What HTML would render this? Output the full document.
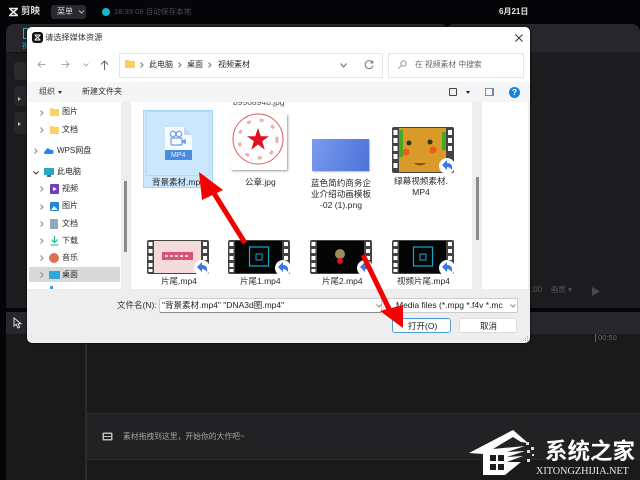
<!DOCTYPE html>
<html><head><meta charset="utf-8"><style>
html,body{margin:0;padding:0;background:#050507;width:640px;height:480px;overflow:hidden}
body{position:relative;font-family:"Liberation Sans","Noto Sans CJK SC",sans-serif;font-size:9px;color:#2a2a2a;filter:blur(.3px)}
.a{position:absolute}
.t{position:absolute;white-space:nowrap;line-height:12px}
.c{position:absolute;text-align:center;line-height:11px;font-size:8.6px;color:#2a2a2a}
svg{position:absolute;overflow:visible}
</style></head><body>
<!-- app background -->
<div class="a" style="left:6px;top:24px;width:634px;height:28px;background:#26262b;border-radius:8px 8px 0 0"></div>
<div class="a" style="left:6px;top:52px;width:634px;height:258px;background:#1c1c1e"></div>
<div class="a" style="left:0;top:310px;width:640px;height:170px;background:#1a1a1b"></div>
<div class="a" style="left:6px;top:312px;width:634px;height:22px;background:#28282c"></div>
<div class="a" style="left:0;top:308px;width:640px;height:4px;background:#050507"></div>
<div class="a" style="left:0;top:310px;width:6px;height:170px;background:#050507"></div>
<div class="a" style="left:85px;top:334px;width:1.5px;height:146px;background:#2c2c2e"></div>
<div class="a" style="left:443px;top:24px;border-top:3px solid #050507;border-left:4px solid transparent;border-right:4px solid transparent"></div>
<!-- top bar -->
<svg style="left:8px;top:7px" width="12" height="10" viewBox="0 0 12 10"><path d="M1 1.500h9M1 8.500h9M2 2l7 6M9 2L2 8" stroke="#e8e8e8" stroke-width="1.600" fill="none"/></svg>
<div class="t" style="left:21px;top:6px;font-size:9.500px;color:#ddd;font-weight:bold">剪映</div>
<div class="a" style="left:51px;top:5px;width:35px;height:14px;background:#2a2a2e;border-radius:3px"></div>
<div class="t" style="left:57px;top:6px;font-size:8px;color:#ddd">菜单</div>
<svg style="left:78px;top:10px" width="7" height="4"><path d="M1 .5l2.500 2.500L6 .5" stroke="#bbb" fill="none"/></svg>
<div class="a" style="left:102px;top:8px;width:8px;height:8px;border-radius:50%;background:#12b8c8"></div>
<div class="t" style="left:114px;top:6px;font-size:7.600px;color:#4e4e52">18:39:08 自动保存本地</div>
<div class="t" style="left:499px;top:6px;font-size:8px;color:#e6e6e6;font-weight:bold">6月21日</div>
<!-- left hints -->
<div class="a" style="left:23px;top:28px;width:7px;height:9px;border:1px solid #1fb5c2"></div>
<div class="t" style="left:22px;top:41px;font-size:7px;color:#1fb5c2">视</div>
<div class="a" style="left:6px;top:52px;width:21px;height:1px;background:#111"></div>
<div class="a" style="left:14px;top:62px;width:13px;height:18px;background:#2a2a2d;border-radius:3px 0 0 3px"></div>
<div class="a" style="left:14px;top:86px;width:13px;height:20px;background:#27272a;border-radius:3px 0 0 3px"></div>
<div class="a" style="left:14px;top:112px;width:13px;height:22px;background:#27272a;border-radius:3px 0 0 3px"></div>
<div class="a" style="left:18px;top:97px;border-left:3px solid #bbb;border-top:2px solid transparent;border-bottom:2px solid transparent"></div>
<div class="a" style="left:18px;top:122px;border-left:3px solid #bbb;border-top:2px solid transparent;border-bottom:2px solid transparent"></div>
<!-- player controls -->
<div class="t" style="left:531px;top:284px;font-size:8px;color:#55555a">:00</div>
<div class="t" style="left:551px;top:284px;font-size:7.500px;color:#55555a">画质 ▾</div>
<svg style="left:592px;top:287px" width="8" height="9"><path d="M0 0l8 4.500L0 9z" fill="#4b4b4f"/></svg>
<div class="a" style="left:595px;top:334px;width:1px;height:8px;background:#666"></div>
<div class="t" style="left:598px;top:332px;font-size:7.500px;color:#666">00:50</div>
<!-- cursor -->
<svg style="left:13px;top:317px" width="9" height="12" viewBox="0 0 9 12"><path d="M1 1v8l2.200-1.600L5 11l1.600-.8L5 6.800h3z" stroke="#ddd" fill="none"/></svg>
<!-- timeline drop area -->
<div class="a" style="left:87px;top:413px;width:553px;height:45px;background:#222224;border-top:1px dotted #333;border-bottom:1px dotted #333"></div>
<svg style="left:102px;top:432px" width="11" height="9"><rect x=".5" y=".5" width="10" height="8" rx="1" fill="#bbb"/><rect x="2" y="2" width="7" height="2" fill="#222"/><rect x="2" y="5" width="7" height="2" fill="#222"/></svg>
<div class="t" style="left:123px;top:431px;font-size:7.800px;color:#a4a4a4">素材拖拽到这里，开始你的大作吧~</div>
<!-- dialog -->
<div class="a" style="left:27px;top:27px;width:503px;height:316px;background:#eeeeee;border-radius:5px;box-shadow:0 0 2px #000;overflow:hidden">
 <div class="a" style="left:0;top:0;width:503px;height:55px;background:#fff"></div>
 <div class="a" style="left:0;top:55px;width:503px;height:20px;background:#f3f5f7"></div>
 <div class="a" style="left:0;top:75px;width:94px;height:187px;background:#fff"></div>
 <div class="a" style="left:104px;top:75px;width:341px;height:187px;background:#fff"></div>
 <div class="a" style="left:455px;top:75px;width:46px;height:187px;background:#fff"></div>
 <div class="a" style="left:97px;top:154px;width:3px;height:71px;background:#8b8b8b"></div>
 <div class="a" style="left:448.500px;top:150px;width:3px;height:63px;background:#8b8b8b"></div>
</div>
<svg style="left:522px;top:335px" width="7" height="7"><g fill="#aaa"><rect x="5" y="1" width="1" height="1"/><rect x="3" y="3" width="1" height="1"/><rect x="5" y="3" width="1" height="1"/><rect x="1" y="5" width="1" height="1"/><rect x="3" y="5" width="1" height="1"/><rect x="5" y="5" width="1" height="1"/></g></svg>
<!-- title -->
<div class="a" style="left:32px;top:32px;width:11px;height:11px;background:#111;border-radius:3px"></div>
<svg style="left:34px;top:34px" width="7" height="7"><path d="M.5 1h6M.5 6h6M1 1.500l5 4M6 1.500l-5 4" stroke="#fff" fill="none"/></svg>
<div class="t" style="left:45px;top:32px;font-size:8.200px;color:#333">请选择媒体资源</div>
<svg style="left:515px;top:34px" width="8" height="8"><path d="M.5.5l7 7M7.500.5l-7 7" stroke="#333" fill="none"/></svg>
<!-- nav row -->
<svg style="left:37px;top:60px" width="9" height="9"><path d="M8.500 4.500H1M4 1.500l-3 3 3 3" stroke="#aaa" fill="none"/></svg>
<svg style="left:61px;top:60px" width="9" height="9"><path d="M.5 4.500H8M5 1.500l3 3-3 3" stroke="#aaa" fill="none"/></svg>
<svg style="left:83px;top:63px" width="6" height="4"><path d="M.5.5L3 3 5.500.5" stroke="#aaa" fill="none"/></svg>
<svg style="left:100px;top:60px" width="9" height="10"><path d="M4.500 10V1M1 4.500l3.500-3.500L8 4.500" stroke="#666" fill="none"/></svg>
<div class="a" style="left:119px;top:52.500px;width:262px;height:23px;border:1px solid #e6e6e6;background:#fff"></div>
<div class="a" style="left:388px;top:52.500px;width:134px;height:23px;border:1px solid #e6e6e6;background:#fff"></div>
<svg style="left:125px;top:60px" width="10" height="8"><path d="M0 1a1 1 0 011-1h3l1 1h4a1 1 0 011 1v5a1 1 0 01-1 1H1a1 1 0 01-1-1z" fill="#fbcf5d"/></svg>
<svg style="left:140px;top:62px" width="4" height="6"><path d="M.5.5L3 3 .5 5.500" stroke="#777" fill="none"/></svg>
<div class="t" style="left:149px;top:59px;font-size:8px">此电脑</div>
<svg style="left:178px;top:62px" width="4" height="6"><path d="M.5.5L3 3 .5 5.500" stroke="#777" fill="none"/></svg>
<div class="t" style="left:187px;top:59px;font-size:8px">桌面</div>
<svg style="left:208px;top:62px" width="4" height="6"><path d="M.5.5L3 3 .5 5.500" stroke="#777" fill="none"/></svg>
<div class="t" style="left:218px;top:59px;font-size:8px">视频素材</div>
<svg style="left:340px;top:63px" width="7" height="5"><path d="M.5.5L3.500 4 6.500.5" stroke="#666" fill="none"/></svg>
<svg style="left:364px;top:60px" width="10" height="10"><path d="M8.500 2.500A4 4 0 109 5.500M8.800.5v2.500H6.300" stroke="#777" fill="none"/></svg>
<svg style="left:398px;top:60px" width="9" height="9"><circle cx="5.500" cy="3.500" r="2.700" stroke="#999" fill="none"/><path d="M3.500 5.500L.5 8.500" stroke="#999"/></svg>
<div class="t" style="left:415px;top:59px;font-size:7.800px;color:#666">在 视频素材 中搜索</div>
<!-- toolbar -->
<div class="t" style="left:39px;top:86px;font-size:8px;color:#333">组织</div>
<div class="a" style="left:58px;top:91px;border-top:3px solid #333;border-left:2.500px solid transparent;border-right:2.500px solid transparent"></div>
<div class="t" style="left:82px;top:86px;font-size:8px;color:#333">新建文件夹</div>
<div class="a" style="left:449px;top:88px;width:6px;height:6px;border:1.200px solid #444;background:#eee;border-radius:1px"></div>
<div class="a" style="left:466px;top:91px;border-top:3px solid #223;border-left:2.500px solid transparent;border-right:2.500px solid transparent"></div>
<div class="a" style="left:485px;top:88px;width:6px;height:6px;border:1px solid #889;border-right:2.500px solid #68a;background:#f8f8f8"></div>
<div class="a" style="left:509px;top:87px;width:11px;height:11px;border-radius:50%;background:#1284e0;color:#fff;font-size:8.500px;font-weight:bold;line-height:11px;text-align:center">?</div>
<!-- tree -->
<svg style="left:40px;top:110px" width="4" height="6"><path d="M.5.5L3 3 .5 5.500" stroke="#888" fill="none"/></svg>
<svg style="left:50px;top:108px" width="9" height="8"><path d="M0 1a1 1 0 011-1h2l1 1h4a1 1 0 011 1v5a1 1 0 01-1 1H1a1 1 0 01-1-1z" fill="#fbd268"/></svg>
<div class="t" style="left:62px;top:106px;font-size:8px">图片</div>
<svg style="left:40px;top:127px" width="4" height="6"><path d="M.5.5L3 3 .5 5.500" stroke="#888" fill="none"/></svg>
<svg style="left:50px;top:126px" width="9" height="8"><path d="M0 1a1 1 0 011-1h2l1 1h4a1 1 0 011 1v5a1 1 0 01-1 1H1a1 1 0 01-1-1z" fill="#fbd268"/></svg>
<div class="t" style="left:62px;top:124px;font-size:8px">文档</div>
<svg style="left:34px;top:148px" width="4" height="6"><path d="M.5.5L3 3 .5 5.500" stroke="#888" fill="none"/></svg>
<svg style="left:44px;top:147px" width="10" height="7"><path d="M1.500 7a1.500 1.500 0 010-3 2.500 2.500 0 014.800-1A2 2 0 018.500 7z" fill="#2a86e2"/></svg>
<div class="t" style="left:57px;top:145px;font-size:8px">WPS网盘</div>
<svg style="left:33px;top:171px" width="6" height="4"><path d="M.5.5L3 3 5.500.5" stroke="#333" fill="none"/></svg>
<div class="a" style="left:44px;top:168px;width:10px;height:7px;background:#2fa4c6"></div><div class="a" style="left:47px;top:175px;width:4px;height:1.500px;background:#667"></div>
<div class="t" style="left:57px;top:166px;font-size:8px">此电脑</div>
<svg style="left:40px;top:186px" width="4" height="6"><path d="M.5.5L3 3 .5 5.500" stroke="#888" fill="none"/></svg>
<div class="a" style="left:50px;top:184px;width:9px;height:10px;background:#6d3ec0;border-radius:1px"></div>
<div class="a" style="left:53px;top:187px;border-left:4px solid #fff;border-top:2px solid transparent;border-bottom:2px solid transparent"></div>
<div class="t" style="left:62px;top:183px;font-size:8px">视频</div>
<svg style="left:40px;top:204px" width="4" height="6"><path d="M.5.5L3 3 .5 5.500" stroke="#888" fill="none"/></svg>
<svg style="left:50px;top:202px" width="9" height="9"><rect width="9" height="9" rx="1" fill="#1f86e0"/><path d="M1 8l3-4 4 4z" fill="#fff"/></svg>
<div class="t" style="left:62px;top:200px;font-size:8px">图片</div>
<svg style="left:40px;top:221px" width="4" height="6"><path d="M.5.5L3 3 .5 5.500" stroke="#888" fill="none"/></svg>
<div class="a" style="left:50px;top:219px;width:8px;height:10px;background:#8fa6bc;border-radius:1px"></div>
<div class="t" style="left:62px;top:218px;font-size:8px">文档</div>
<svg style="left:40px;top:238px" width="4" height="6"><path d="M.5.5L3 3 .5 5.500" stroke="#888" fill="none"/></svg>
<svg style="left:50px;top:236px" width="9" height="10"><path d="M4.500 0v6M1.500 3.500l3 3 3-3M.5 9h8" stroke="#1cb58a" stroke-width="1.100" fill="none"/></svg>
<div class="t" style="left:62px;top:235px;font-size:8px">下载</div>
<svg style="left:40px;top:255px" width="4" height="6"><path d="M.5.5L3 3 .5 5.500" stroke="#888" fill="none"/></svg>
<div class="a" style="left:49px;top:253px;width:10px;height:10px;border-radius:50%;background:#e2704e"></div>
<div class="t" style="left:62px;top:252px;font-size:8px">音乐</div>
<div class="a" style="left:29px;top:267px;width:91px;height:15px;background:#d9d9d9"></div>
<svg style="left:40px;top:272px" width="4" height="6"><path d="M.5.5L3 3 .5 5.500" stroke="#888" fill="none"/></svg>
<div class="a" style="left:49px;top:271px;width:11px;height:8px;background:#2da8d8"></div>
<div class="t" style="left:62px;top:269px;font-size:8px">桌面</div>
<div class="a" style="left:50px;top:286px;width:3px;height:3px;background:#4a9be0"></div>
<!-- files -->
<div class="a" style="left:233px;top:102px;width:60px;height:6px;overflow:hidden"><div class="t" style="left:0;top:-6px;font-size:8.500px;color:#555">b956894b.jpg</div></div>
<div class="a" style="left:143px;top:110px;width:70px;height:78px;background:#cce6fb;border:1px solid #a8d6f7;box-sizing:border-box"></div>
<div class="a" style="left:146px;top:111px;width:64px;height:65px;border:1px solid #b8d9f0;box-sizing:border-box"></div>
<svg style="left:165px;top:127px" width="27" height="33" viewBox="0 0 27 33"><path d="M0 0h19l8 8v25H0z" fill="#f6fbff"/><path d="M19 0l8 8h-8z" fill="#c2d9f0"/><rect y="23" width="27" height="10" fill="#4b8be0"/><circle cx="8" cy="7" r="2.800" fill="none" stroke="#6d9fe6" stroke-width="1.200"/><circle cx="14" cy="7" r="2.800" fill="none" stroke="#6d9fe6" stroke-width="1.200"/><rect x="6" y="11" width="11" height="7" rx="1" fill="none" stroke="#6d9fe6" stroke-width="1.200"/><path d="M17 13.500l4-1.500v5l-4-1.500" fill="#6d9fe6"/></svg>
<div class="t" style="left:171px;top:150px;font-size:7px;color:#e8f2ff">MP4</div>
<div class="t" style="left:152px;top:175.500px;font-size:8.500px;color:#2a2a2a">背景素材.mp4</div>
<div class="a" style="left:231px;top:114px;width:56px;height:56px;background:#fff;box-shadow:1px 1px 2px #999"></div>
<svg style="left:231px;top:112px" width="56" height="56" viewBox="0 0 56 56"><circle cx="27" cy="27" r="25" stroke="#dc5a60" stroke-width="1" fill="none"/><path d="M27 16l2.800 8.300h8.200l-6.800 5 2.600 8.500-6.800-5.300-6.800 5.300 2.600-8.500-6.800-5h8.200z" fill="#e01020"/><circle cx="27" cy="27" r="19" stroke="#e8b0b0" stroke-width="3" stroke-dasharray="4 9" fill="none"/></svg>
<div class="t" style="left:245px;top:176px;font-size:8.500px;color:#2a2a2a">公章.jpg</div>
<div class="a" style="left:312px;top:139px;width:57px;height:32px;background:linear-gradient(110deg,#7d9bee,#4a72d9);box-shadow:1px 1px 1px #bbb"></div>
<div class="c" style="left:307px;top:178px;width:68px">蓝色简约商务企<br>业介绍动画模板<br>-02 (1).png</div>
<svg style="left:392px;top:127px" width="62" height="50" viewBox="0 0 62 50"><rect width="62" height="46" rx="2" fill="#444"/><rect x="7" y="1" width="47" height="44" fill="#d99a2a"/><path d="M7 3h4v27H7zM50 5h4v18h-4z" fill="#46a820"/><circle cx="14" cy="25" r="3.500" fill="#ee5a1a"/><circle cx="41" cy="23" r="3.500" fill="#ee5a1a"/><circle cx="17" cy="16" r="2.500" fill="#332"/><circle cx="38" cy="15" r="2.500" fill="#332"/><path d="M22 36q6 5 12 0z" fill="#885510"/><g fill="#fff"><rect x="1.500" y="3" width="4" height="5"/><rect x="1.500" y="11" width="4" height="5"/><rect x="1.500" y="19" width="4" height="5"/><rect x="1.500" y="27" width="4" height="5"/><rect x="1.500" y="36" width="4" height="5"/><rect x="56" y="3" width="4" height="5"/><rect x="56" y="11" width="4" height="5"/><rect x="56" y="19" width="4" height="5"/></g><circle cx="55" cy="39" r="8" fill="#fff"/><path d="M50 38l5-5v3q6 0 5 7-2-3-5-3v3z" fill="#3a78e6"/></svg>
<div class="c" style="left:390px;top:176px;width:62px">绿幕视频素材.<br>MP4</div>
<!-- row 2 -->
<svg style="left:147px;top:240px" width="62" height="50" viewBox="0 0 62 50"><rect width="62" height="34" rx="2" fill="#444"/><rect x="7" y="1" width="47" height="32" fill="#f4dada"/><rect x="15" y="12" width="31" height="8" fill="#d8527a"/><path d="M18 16h25" stroke="#f6d0dc" stroke-width="2" stroke-dasharray="3 2"/><g fill="#fff"><rect x="1.500" y="2" width="4" height="4"/><rect x="1.500" y="9" width="4" height="4"/><rect x="1.500" y="16" width="4" height="4"/><rect x="1.500" y="23" width="4" height="4"/><rect x="1.500" y="29" width="4" height="3"/><rect x="56" y="2" width="4" height="4"/><rect x="56" y="9" width="4" height="4"/><rect x="56" y="16" width="4" height="4"/></g><circle cx="55" cy="28" r="8" fill="#fff"/><path d="M50 27l5-5v3q6 0 5 7-2-3-5-3v3z" fill="#3a78e6"/></svg>
<div class="t" style="left:161px;top:275px;font-size:8.500px">片尾.mp4</div>
<svg style="left:228px;top:240px" width="62" height="50" viewBox="0 0 62 50"><rect width="62" height="34" rx="2" fill="#444"/><rect x="7" y="1" width="47" height="32" fill="#050505"/><rect x="21.500" y="7" width="19" height="19" fill="none" stroke="#18a8c8" stroke-width="1.200"/><rect x="28" y="14" width="6" height="6" fill="none" stroke="#18a8c8" stroke-width="1"/><g fill="#fff"><rect x="1.500" y="2" width="4" height="4"/><rect x="1.500" y="9" width="4" height="4"/><rect x="1.500" y="16" width="4" height="4"/><rect x="1.500" y="23" width="4" height="4"/><rect x="1.500" y="29" width="4" height="3"/><rect x="56" y="2" width="4" height="4"/><rect x="56" y="9" width="4" height="4"/><rect x="56" y="16" width="4" height="4"/></g><circle cx="55" cy="28" r="8" fill="#fff"/><path d="M50 27l5-5v3q6 0 5 7-2-3-5-3v3z" fill="#3a78e6"/></svg>
<div class="t" style="left:240px;top:275px;font-size:8.500px">片尾1.mp4</div>
<svg style="left:310px;top:240px" width="62" height="50" viewBox="0 0 62 50"><rect width="62" height="34" rx="2" fill="#444"/><rect x="7" y="1" width="47" height="32" fill="#050505"/><circle cx="30" cy="14" r="5" fill="#9c8c60"/><circle cx="30" cy="21" r="3" fill="#e01020"/><g fill="#fff"><rect x="1.500" y="2" width="4" height="4"/><rect x="1.500" y="9" width="4" height="4"/><rect x="1.500" y="16" width="4" height="4"/><rect x="1.500" y="23" width="4" height="4"/><rect x="1.500" y="29" width="4" height="3"/><rect x="56" y="2" width="4" height="4"/><rect x="56" y="9" width="4" height="4"/><rect x="56" y="16" width="4" height="4"/></g><circle cx="55" cy="28" r="8" fill="#fff"/><path d="M50 27l5-5v3q6 0 5 7-2-3-5-3v3z" fill="#3a78e6"/></svg>
<div class="t" style="left:322px;top:275px;font-size:8.500px">片尾2.mp4</div>
<svg style="left:392px;top:240px" width="62" height="50" viewBox="0 0 62 50"><rect width="62" height="34" rx="2" fill="#444"/><rect x="7" y="1" width="47" height="32" fill="#050505"/><rect x="21.500" y="7" width="19" height="19" fill="none" stroke="#18a8c8" stroke-width="1.200"/><rect x="28" y="14" width="6" height="6" fill="none" stroke="#18a8c8" stroke-width="1"/><g fill="#fff"><rect x="1.500" y="2" width="4" height="4"/><rect x="1.500" y="9" width="4" height="4"/><rect x="1.500" y="16" width="4" height="4"/><rect x="1.500" y="23" width="4" height="4"/><rect x="1.500" y="29" width="4" height="3"/><rect x="56" y="2" width="4" height="4"/><rect x="56" y="9" width="4" height="4"/><rect x="56" y="16" width="4" height="4"/></g><circle cx="55" cy="28" r="8" fill="#fff"/><path d="M50 27l5-5v3q6 0 5 7-2-3-5-3v3z" fill="#3a78e6"/></svg>
<div class="t" style="left:397px;top:275px;font-size:8.500px">视频片尾.mp4</div>
<!-- bottom form -->
<div class="t" style="left:117px;top:299px;font-size:8.500px;color:#333">文件名(N):</div>
<div class="a" style="left:159px;top:298px;width:221px;height:13px;background:#fff;border:1px solid #ccc;border-bottom-color:#888;border-radius:2px"></div>
<div class="t" style="left:162px;top:299px;font-size:8.500px;color:#222">"背景素材.mp4" "DNA3d图.mp4"</div>
<svg style="left:376px;top:304px" width="6" height="4"><path d="M.5.5L3 3 5.500.5" stroke="#888" fill="none"/></svg>
<div class="a" style="left:386px;top:298px;width:130px;height:13px;background:#fff;border:1px solid #ccc;border-radius:2px"></div>
<div class="t" style="left:396px;top:299px;font-size:8.500px;color:#222;width:108px;overflow:hidden">Media files (*.mpg *.f4v *.mc</div>
<svg style="left:510px;top:304px" width="6" height="4"><path d="M.5.5L3 3 5.500.5" stroke="#888" fill="none"/></svg>
<div class="a" style="left:392px;top:318px;width:57px;height:13px;background:#fff;border:1px solid #4a9ed8;border-radius:3px"></div>
<div class="t" style="left:408px;top:320px;font-size:8.500px;color:#222">打开(O)</div>
<div class="a" style="left:459px;top:318px;width:56px;height:13px;background:#fff;border:1px solid #ddd;border-radius:3px"></div>
<div class="t" style="left:480px;top:320px;font-size:8.500px;color:#222">取消</div>
<!-- red arrows -->
<svg style="left:0;top:0" width="640" height="480"><path d="M245 243L212 190" stroke="#f40000" stroke-width="5" fill="none"/><path d="M199 172L223 190 202 200z" fill="#f40000"/><path d="M363 255L390 311" stroke="#f40000" stroke-width="5" fill="none"/><path d="M403 328L380 311 403 305z" fill="#f40000"/></svg>
<!-- watermark -->
<svg style="left:469px;top:429px" width="70" height="48" viewBox="0 0 70 48"><path d="M0 24L44 1 59 14 52 13 44 8 24 20 56 17 38 23 56 22 38 28 54 27 38 33 52 33 36 46H14V25z" fill="#fff"/><g fill="#1d1d1e"><rect x="21" y="26" width="6" height="6"/><rect x="29" y="26" width="6" height="6"/><rect x="21" y="35" width="6" height="6"/><rect x="29" y="35" width="6" height="6"/></g><g fill="#ddd"><rect x="57" y="13" width="3" height="3"/><rect x="62" y="18" width="3" height="3"/><rect x="58" y="21" width="3" height="3"/><rect x="63" y="25" width="2" height="2"/><rect x="58" y="30" width="3" height="3"/></g></svg>
<div class="t" style="left:545px;top:440px;font-size:22.500px;line-height:24px;font-weight:bold;color:#fff">系统之家</div>
<div class="t" style="left:536px;top:467px;font-family:'Liberation Serif',serif;font-size:10.200px;line-height:10px;color:#e8e8e8">XITONGZHIJIA.NET</div>
</body></html>
